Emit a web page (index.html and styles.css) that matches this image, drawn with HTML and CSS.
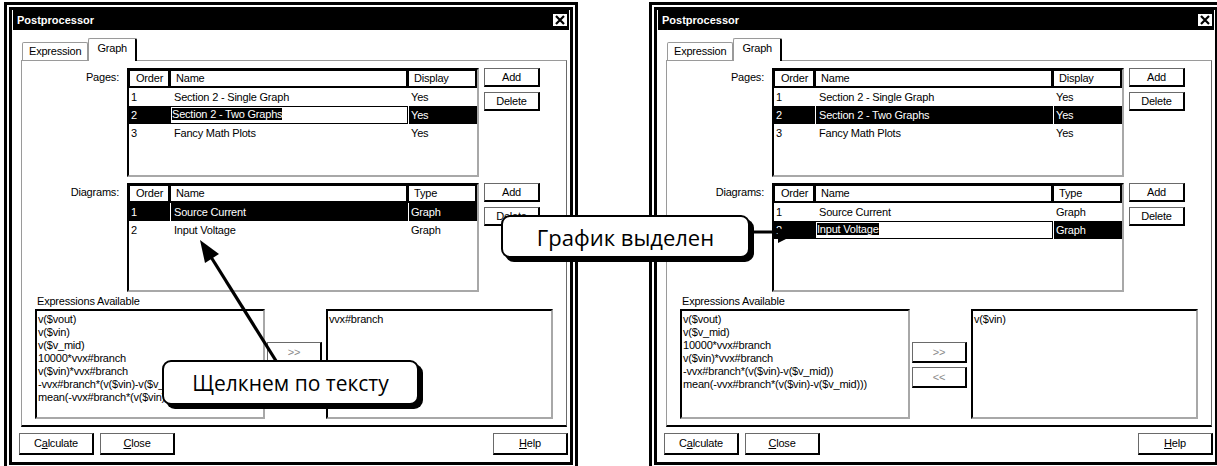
FILE: index.html
```html
<!DOCTYPE html>
<html>
<head>
<meta charset="utf-8">
<link rel="stylesheet" href="styles.css">
</head>
<body>
<div class="stage">

  <div class="dialog">
    <div class="titlebar">
      <span class="title">Postprocessor</span>
      <span class="xbtn"><svg width="14" height="12" viewBox="0 0 14 12"><path d="M3 2 L11 10 M11 2 L3 10" stroke="#000" stroke-width="2.2"/></svg></span>
    </div>
    <div class="tabs"><div class="tab">Expression</div><div class="tab active">Graph</div></div>
    <div class="panel">
      <div class="section">
        <div class="lbl">Pages:</div>
        <div class="listview">
          <div class="lv-head"><div class="c-o">Order</div><div class="c-n">Name</div><div class="c-x">Display</div></div>
          <div class="lv-row"><div class="c-o">1</div><div class="c-n">Section 2 - Single Graph</div><div class="c-x">Yes</div></div>
          <div class="lv-row edit"><div class="c-o">2</div><div class="c-n"><span class="hl">Section 2 - Two Graphs</span></div><div class="c-x">Yes</div></div>
          <div class="lv-row"><div class="c-o">3</div><div class="c-n">Fancy Math Plots</div><div class="c-x">Yes</div></div>
        </div>
        <div class="btncol"><div class="btn">Add</div><div class="btn">Delete</div></div>
      </div>
      <div class="section second">
        <div class="lbl">Diagrams:</div>
        <div class="listview">
          <div class="lv-head"><div class="c-o">Order</div><div class="c-n">Name</div><div class="c-x">Type</div></div>
          <div class="lv-row sel"><div class="c-o">1</div><div class="c-n">Source Current</div><div class="c-x">Graph</div></div>
          <div class="lv-row"><div class="c-o">2</div><div class="c-n">Input Voltage</div><div class="c-x">Graph</div></div>
        </div>
        <div class="btncol"><div class="btn">Add</div><div class="btn">Delete</div></div>
      </div>
      <div class="expr-label">Expressions Available</div>
      <div class="expr-row">
        <div class="listbox lb-left">
          <div>v($vout)</div>
          <div>v($vin)</div>
          <div>v($v_mid)</div>
          <div>10000*vvx#branch</div>
          <div>v($vin)*vvx#branch</div>
          <div>-vvx#branch*(v($vin)-v($v_mid))</div>
          <div>mean(-vvx#branch*(v($vin)-v($v_mid)))</div>
        </div>
        <div class="movecol"><div class="btn mv">&gt;&gt;</div><div class="btn mv">&lt;&lt;</div></div>
        <div class="listbox lb-right">
          <div>vvx#branch</div>
        </div>
      </div>
    </div>
    <div class="footer">
      <div class="btn fb">C<u>a</u>lculate</div>
      <div class="btn fb"><u>C</u>lose</div>
      <div class="btn fb help"><u>H</u>elp</div>
    </div>
  </div>

  <div class="dialog">
    <div class="titlebar">
      <span class="title">Postprocessor</span>
      <span class="xbtn"><svg width="14" height="12" viewBox="0 0 14 12"><path d="M3 2 L11 10 M11 2 L3 10" stroke="#000" stroke-width="2.2"/></svg></span>
    </div>
    <div class="tabs"><div class="tab">Expression</div><div class="tab active">Graph</div></div>
    <div class="panel">
      <div class="section">
        <div class="lbl">Pages:</div>
        <div class="listview">
          <div class="lv-head"><div class="c-o">Order</div><div class="c-n">Name</div><div class="c-x">Display</div></div>
          <div class="lv-row"><div class="c-o">1</div><div class="c-n">Section 2 - Single Graph</div><div class="c-x">Yes</div></div>
          <div class="lv-row sel"><div class="c-o">2</div><div class="c-n">Section 2 - Two Graphs</div><div class="c-x">Yes</div></div>
          <div class="lv-row"><div class="c-o">3</div><div class="c-n">Fancy Math Plots</div><div class="c-x">Yes</div></div>
        </div>
        <div class="btncol"><div class="btn">Add</div><div class="btn">Delete</div></div>
      </div>
      <div class="section second">
        <div class="lbl">Diagrams:</div>
        <div class="listview">
          <div class="lv-head"><div class="c-o">Order</div><div class="c-n">Name</div><div class="c-x">Type</div></div>
          <div class="lv-row"><div class="c-o">1</div><div class="c-n">Source Current</div><div class="c-x">Graph</div></div>
          <div class="lv-row edit"><div class="c-o">2</div><div class="c-n"><span class="hl">Input Voltage</span></div><div class="c-x">Graph</div></div>
        </div>
        <div class="btncol"><div class="btn">Add</div><div class="btn">Delete</div></div>
      </div>
      <div class="expr-label">Expressions Available</div>
      <div class="expr-row">
        <div class="listbox lb-left">
          <div>v($vout)</div>
          <div>v($v_mid)</div>
          <div>10000*vvx#branch</div>
          <div>v($vin)*vvx#branch</div>
          <div>-vvx#branch*(v($vin)-v($v_mid))</div>
          <div>mean(-vvx#branch*(v($vin)-v($v_mid)))</div>
        </div>
        <div class="movecol"><div class="btn mv">&gt;&gt;</div><div class="btn mv">&lt;&lt;</div></div>
        <div class="listbox lb-right">
          <div>v($vin)</div>
        </div>
      </div>
    </div>
    <div class="footer">
      <div class="btn fb">C<u>a</u>lculate</div>
      <div class="btn fb"><u>C</u>lose</div>
      <div class="btn fb help"><u>H</u>elp</div>
    </div>
  </div>

  <svg class="arrows" width="1217" height="466" viewBox="0 0 1217 466">
    <line x1="278" y1="364" x2="211" y2="257" stroke="#000" stroke-width="3.2"/>
    <polygon points="200,240 219,254 205,263" fill="#000"/>
    <line x1="745" y1="232" x2="782" y2="232" stroke="#000" stroke-width="3.2"/>
    <polygon points="778,227 778,243 792,236" fill="#000"/>
  </svg>

  <div class="callout c1">Щелкнем по тексту</div>
  <div class="callout c2">График выделен</div>
</div>
</body>
</html>
```

FILE: styles.css
```css
* { box-sizing: border-box; margin: 0; padding: 0; }
html, body { width: 1217px; height: 466px; overflow: hidden; background: #fff; }
body {
  font-family: "Liberation Sans", Arial, sans-serif;
  font-size: 11px;
  letter-spacing: -0.2px;
  color: #000;
}
.stage {
  position: relative;
  width: 1217px;
  height: 466px;
  overflow: hidden;
  display: flex;
  gap: 71px;
  padding: 2px 0 0 4px;
}

/* window frame */
.dialog {
  flex: none;
  width: 574px;
  height: 468px;
  border: 3px solid #000;
  box-shadow: inset 0 0 0 2px #fff, inset 0 0 0 5px #000;
  padding: 5px 6px 0 6px;
  display: flex;
  flex-direction: column;
  background: #fff;
}
.titlebar {
  height: 20px;
  background: #000;
  display: flex;
  align-items: center;
  justify-content: space-between;
  padding: 0 1px 0 4px;
}
.title { color: #fff; font-weight: bold; font-size: 11px; letter-spacing: 0; }
.xbtn {
  width: 16px;
  height: 14px;
  background: #fff;
  border: 1px solid #000;
  display: flex;
  align-items: center;
  justify-content: center;
}

/* tabs */
.tabs {
  display: flex;
  align-items: flex-end;
  height: 22px;
  margin: 8px 0 0 9px;
  position: relative;
  z-index: 1;
}
.tab {
  height: 18px;
  line-height: 16px;
  padding: 0 6px;
  border: 1px solid #9a9a9a;
  border-bottom: none;
  border-radius: 2px 2px 0 0;
  background: #fff;
}
.tab.active {
  height: 23px;
  margin-bottom: -1px;
  padding: 0 8px 0 8px;
  line-height: 19px;
  border-right: 2px solid #000;
}

/* panel */
.panel {
  margin-left: 8px;
  width: 546px;
  height: 367px;
  border-top: 1px solid #9a9a9a;
  border-left: 1px solid #9a9a9a;
  border-right: 1px solid #6a6a6a;
  border-bottom: 2px solid #000;
  padding-top: 7px;
}
.section { display: flex; align-items: flex-start; height: 109px; }
.section.second { margin-top: 6px; }
.lbl { width: 97px; margin-right: 8px; text-align: right; margin-top: 3px; }

.listview {
  width: 352px;
  height: 109px;
  border-top: 2px solid #000;
  border-left: 2px solid #000;
  border-right: 2px solid #a8a8a8;
  border-bottom: 2px solid #a8a8a8;
  overflow: hidden;
}
.lv-head { display: flex; height: 18px; }
.lv-head > div {
  border: 1px solid #000;
  border-right-width: 2px;
  border-bottom-width: 2px;
  padding-left: 5px;
  line-height: 15px;
}
.lv-row { display: flex; height: 18px; line-height: 18px; white-space: nowrap; }
.lv-row > div + div { border-left: 1px solid #fff; }
.c-o { width: 41px; padding-left: 2px; }
.c-n { width: 238px; padding-left: 3px; }
.c-x { width: 69px; padding-left: 2px; }
.lv-head .c-o { padding-left: 6px; }
.lv-row.sel > div { background: #000; color: #fff; }
.lv-row.edit .c-o,
.lv-row.edit .c-x { background: #000; color: #fff; }
.lv-row.edit .c-n {
  border: 1px solid #000;
  padding-left: 1px;
  line-height: 15px;
}
.hl { background: #000; color: #fff; }

.btncol { margin-left: 5px; display: flex; flex-direction: column; gap: 5px; }
.btn {
  background: #fff;
  border-top: 1px solid #6a6a6a;
  border-left: 1px solid #6a6a6a;
  border-right: 2px solid #000;
  border-bottom: 2px solid #000;
  text-align: center;
  width: 56px;
  height: 19px;
  line-height: 16px;
}

.expr-label { margin: 2px 0 0 15px; height: 15px; line-height: 15px; }
.expr-row { display: flex; margin-left: 13px; height: 110px; }
.listbox {
  height: 110px;
  border-top: 2px solid #000;
  border-left: 2px solid #000;
  border-right: 2px solid #a8a8a8;
  border-bottom: 2px solid #a8a8a8;
  padding: 2px 1px;
  line-height: 13px;
  white-space: nowrap;
  overflow: hidden;
}
.lb-left { width: 230px; }
.lb-right { width: 227px; }
.movecol {
  width: 55px;
  margin: 33px 4px 0 2px;
  display: flex;
  flex-direction: column;
  gap: 4px;
}
.btn.mv { width: 55px; height: 21px; line-height: 18px; color: #8a8a8a; }

.footer { display: flex; gap: 6px; margin-top: 6px; padding: 0 1px 0 6px; }
.btn.fb { width: 75px; height: 22px; line-height: 19px; }
.btn.fb.help { margin-left: auto; }

/* overlays */
.arrows { position: absolute; left: 0; top: 0; pointer-events: none; }
.callout {
  position: absolute;
  background: #fff;
  border: 2px solid #000;
  border-radius: 9px;
  box-shadow: 4px 4px 0 #000;
  font-family: "Open Sans", "DejaVu Sans", sans-serif;
  letter-spacing: 0;
  display: flex;
  align-items: center;
  justify-content: center;
}
.c1 { left: 162px; top: 360px; width: 257px; height: 45px; font-size: 21px; }
.c2 { left: 501px; top: 215px; width: 249px; height: 43px; font-size: 22px; }
```
